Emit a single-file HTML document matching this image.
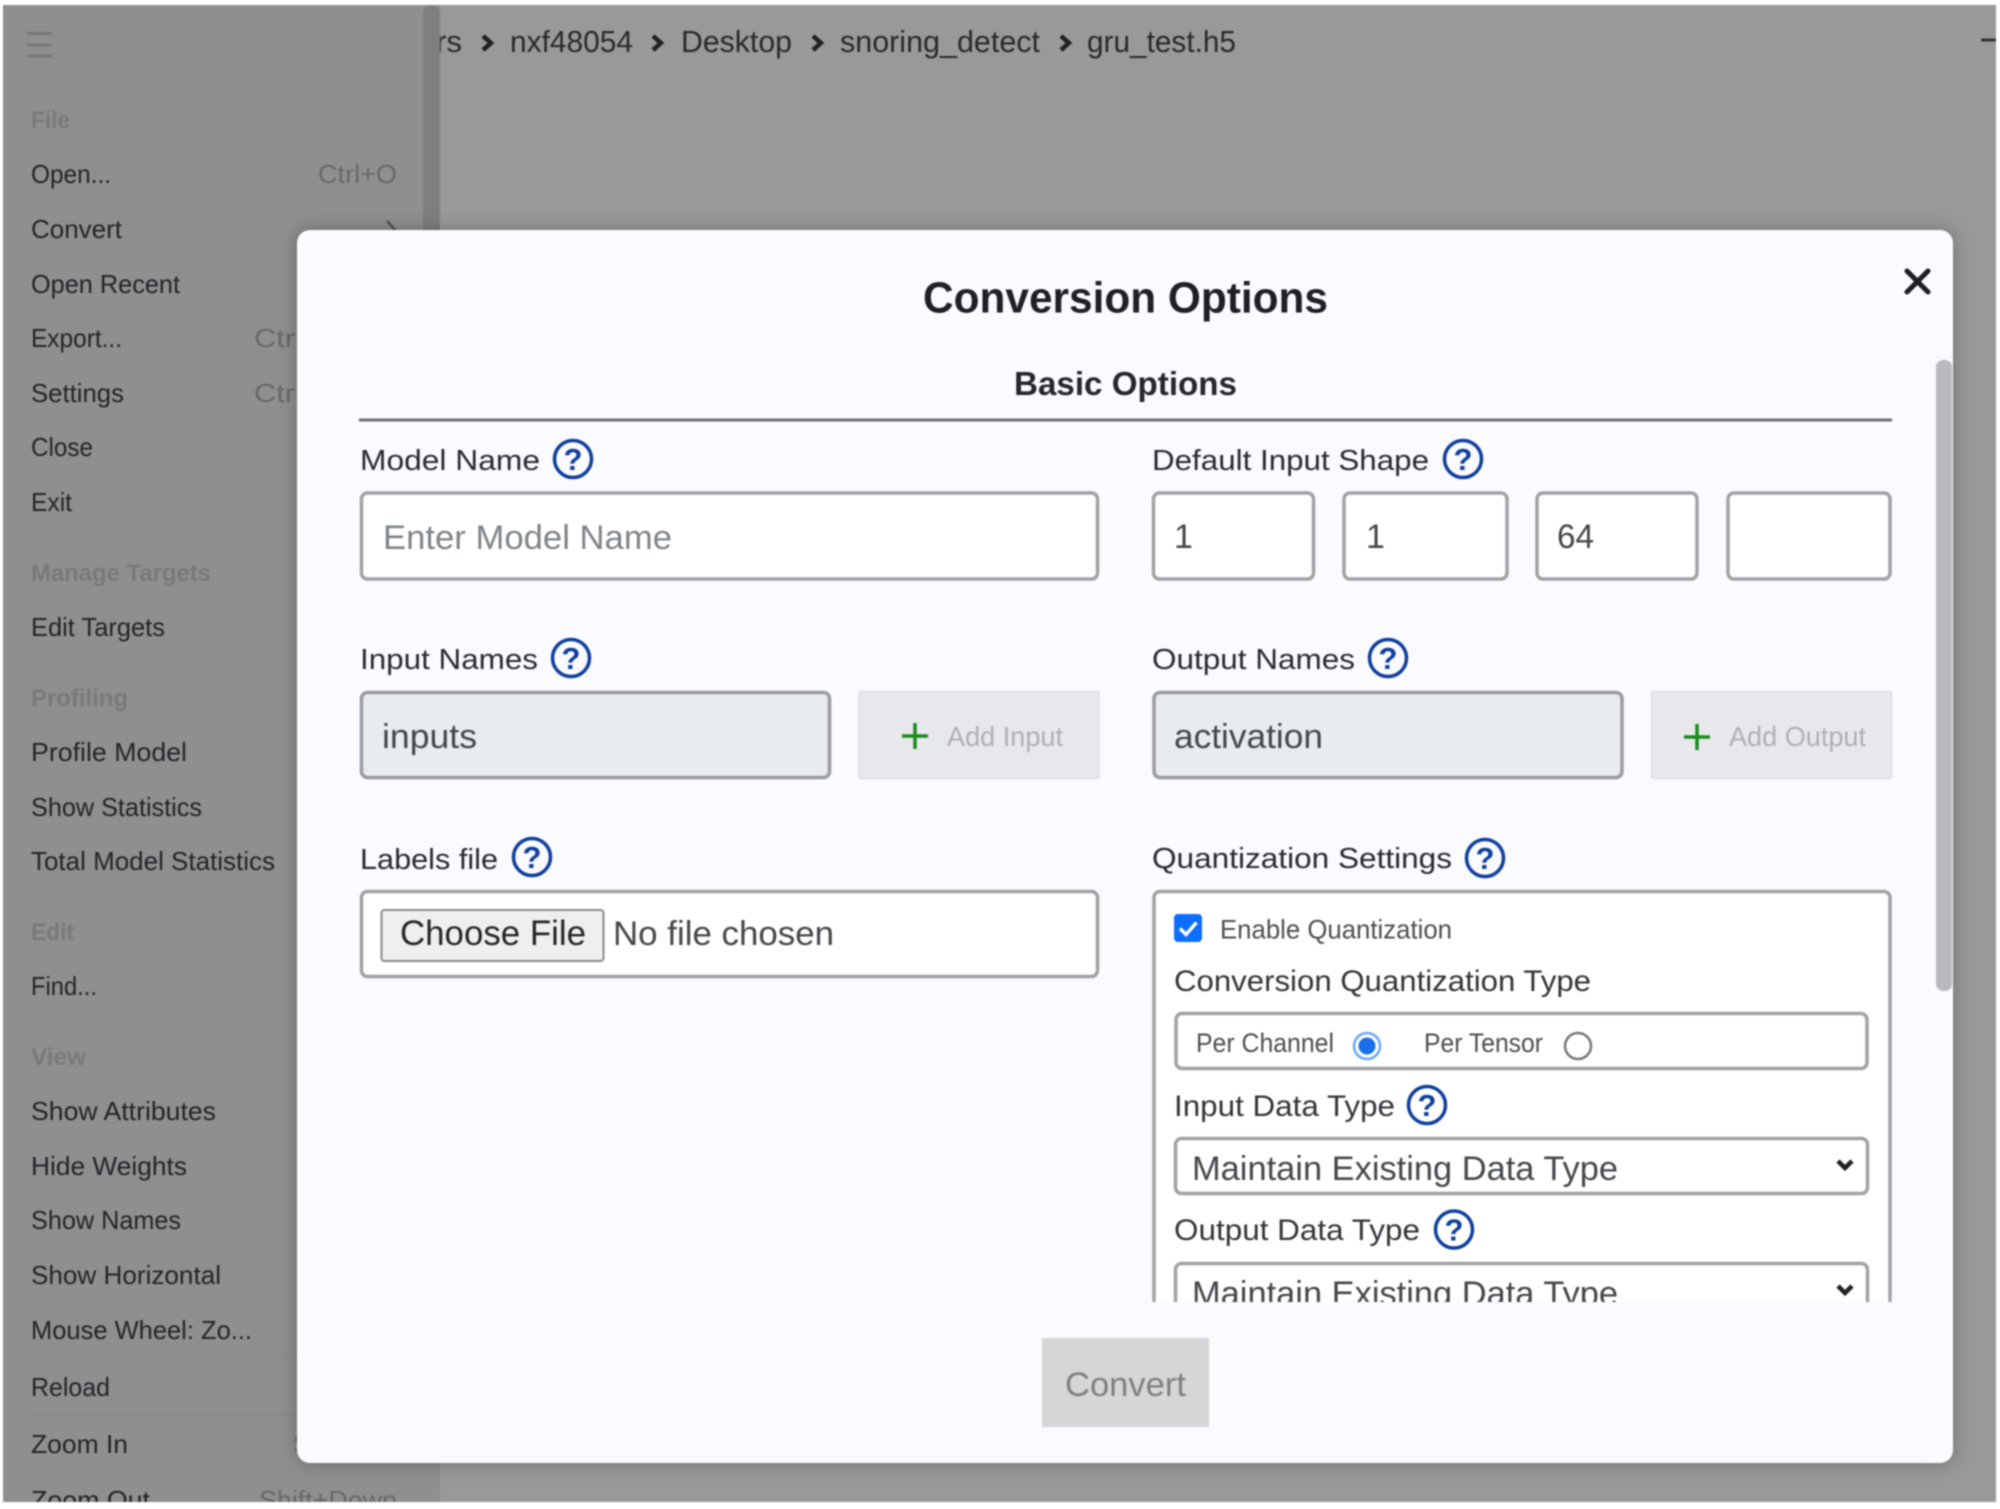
<!DOCTYPE html>
<html lang="en">
<head>
<meta charset="utf-8">
<title>Conversion Options</title>
<style>
html,body{margin:0;padding:0;background:#fff;width:2000px;height:1509px;overflow:hidden}
svg{display:block;filter:blur(.75px)}
text{font-family:"Liberation Sans",sans-serif}
.m{font-size:26px;fill:#242428}
.h{font-size:24px;font-weight:bold;fill:#797979}
.s{font-size:26px;fill:#686868}
.b{font-size:31px;fill:#29292b}
.l{font-size:29px;fill:#29292e}
.v{font-size:34px;fill:#43474b}
.add{font-size:28px;fill:#b0b0b4}
.q{font-size:27px;fill:#4e4e53}
.ql{font-size:30px;fill:#333339}
.hq{font-size:31px;fill:#0f3f9c;text-anchor:middle;font-weight:bold}
.box{fill:#fff;stroke:#a2a2a5;stroke-width:3.500}
.ro{fill:#e9ecef;stroke:#9c9c9f;stroke-width:3.500}
.hc{fill:none;stroke:#0f3f9c;stroke-width:3.500}
.ch{fill:none;stroke:#222224;stroke-width:4.500}
</style>
</head>
<body>
<svg xmlns="http://www.w3.org/2000/svg" width="2000" height="1509" viewBox="0 0 2000 1509">
  <!-- window background -->
  <rect x="0" y="0" width="2000" height="1509" fill="#999999"/>

  <!-- breadcrumb -->
  <text class="b" x="436" y="52" textLength="26" lengthAdjust="spacingAndGlyphs">rs</text>
  <path class="ch" d="M483 36l8 7-8 7"/>
  <text class="b" x="510" y="52" textLength="123" lengthAdjust="spacingAndGlyphs">nxf48054</text>
  <path class="ch" d="M653 36l8 7-8 7"/>
  <text class="b" x="681" y="52" textLength="111" lengthAdjust="spacingAndGlyphs">Desktop</text>
  <path class="ch" d="M813 36l8 7-8 7"/>
  <text class="b" x="840" y="52" textLength="200" lengthAdjust="spacingAndGlyphs">snoring_detect</text>
  <path class="ch" d="M1061 36l8 7-8 7"/>
  <text class="b" x="1087" y="52" textLength="149" lengthAdjust="spacingAndGlyphs">gru_test.h5</text>
  <rect x="1981" y="38.500" width="15" height="3" fill="#333"/>

  <!-- sidebar -->
  <rect x="0" y="0" width="440" height="1509" fill="#8f8f8f"/>
  <rect x="423" y="5" width="17" height="400" rx="8" fill="#7f7f80"/>
  <g stroke="#777" stroke-width="3"><path d="M27 33.500h25M27 45h25M27 56h25"/></g>

  <text class="h" x="31" y="128" textLength="39" lengthAdjust="spacingAndGlyphs">File</text>
  <text class="m" x="31" y="183" textLength="80" lengthAdjust="spacingAndGlyphs">Open...</text>
  <text class="s" x="318" y="183" textLength="79" lengthAdjust="spacingAndGlyphs">Ctrl+O</text>
  <text class="m" x="31" y="238" textLength="91" lengthAdjust="spacingAndGlyphs">Convert</text>
  <path d="M387 221l9 10" fill="none" stroke="#555" stroke-width="2.500"/>
  <text class="m" x="31" y="293" textLength="149" lengthAdjust="spacingAndGlyphs">Open Recent</text>
  <text class="m" x="31" y="347" textLength="91" lengthAdjust="spacingAndGlyphs">Export...</text>
  <text class="s" x="254" y="347" textLength="48" lengthAdjust="spacingAndGlyphs">Ctrl</text>
  <text class="m" x="31" y="402" textLength="93" lengthAdjust="spacingAndGlyphs">Settings</text>
  <text class="s" x="254" y="402" textLength="48" lengthAdjust="spacingAndGlyphs">Ctrl</text>
  <text class="m" x="31" y="456" textLength="62" lengthAdjust="spacingAndGlyphs">Close</text>
  <text class="m" x="31" y="511" textLength="41" lengthAdjust="spacingAndGlyphs">Exit</text>
  <text class="h" x="31" y="581" textLength="180" lengthAdjust="spacingAndGlyphs">Manage Targets</text>
  <text class="m" x="31" y="636" textLength="134" lengthAdjust="spacingAndGlyphs">Edit Targets</text>
  <text class="h" x="31" y="706" textLength="97" lengthAdjust="spacingAndGlyphs">Profiling</text>
  <text class="m" x="31" y="761" textLength="156" lengthAdjust="spacingAndGlyphs">Profile Model</text>
  <text class="m" x="31" y="816" textLength="171" lengthAdjust="spacingAndGlyphs">Show Statistics</text>
  <text class="m" x="31" y="870" textLength="244" lengthAdjust="spacingAndGlyphs">Total Model Statistics</text>
  <text class="h" x="31" y="940" textLength="43" lengthAdjust="spacingAndGlyphs">Edit</text>
  <text class="m" x="31" y="995" textLength="66" lengthAdjust="spacingAndGlyphs">Find...</text>
  <text class="h" x="31" y="1065" textLength="55" lengthAdjust="spacingAndGlyphs">View</text>
  <text class="m" x="31" y="1120" textLength="185" lengthAdjust="spacingAndGlyphs">Show Attributes</text>
  <text class="m" x="31" y="1175" textLength="156" lengthAdjust="spacingAndGlyphs">Hide Weights</text>
  <text class="m" x="31" y="1229" textLength="150" lengthAdjust="spacingAndGlyphs">Show Names</text>
  <text class="m" x="31" y="1284" textLength="190" lengthAdjust="spacingAndGlyphs">Show Horizontal</text>
  <text class="m" x="31" y="1339" textLength="221" lengthAdjust="spacingAndGlyphs">Mouse Wheel: Zo...</text>
  <rect x="31" y="1359" width="380" height="1.500" fill="#8a8a8a"/>
  <text class="m" x="31" y="1396" textLength="79" lengthAdjust="spacingAndGlyphs">Reload</text>
  <rect x="31" y="1414" width="380" height="1.500" fill="#8a8a8a"/>
  <text class="m" x="31" y="1453" textLength="97" lengthAdjust="spacingAndGlyphs">Zoom In</text>
  <text class="s" x="293" y="1453">S</text>
  <text class="m" x="31" y="1509" textLength="119" lengthAdjust="spacingAndGlyphs">Zoom Out</text>
  <text class="s" x="259" y="1509" textLength="138" lengthAdjust="spacingAndGlyphs">Shift+Down</text>

  <!-- modal -->
  <rect x="297" y="230" width="1656" height="1233" rx="13" fill="#fafaff" style="filter:drop-shadow(0 0 9px rgba(0,0,0,.28))"/>
  <text x="923" y="312.500" font-size="44" font-weight="bold" fill="#1f1f24" textLength="405" lengthAdjust="spacingAndGlyphs">Conversion Options</text>
  <path d="M1907 271l21 21M1928 271l-21 21" stroke="#1d1d22" stroke-width="5" stroke-linecap="round" fill="none"/>
  <text x="1014" y="395" font-size="33" font-weight="bold" fill="#26262b" textLength="223" lengthAdjust="spacingAndGlyphs">Basic Options</text>
  <rect x="359" y="418.500" width="1533" height="3" fill="#6e6e72"/>

  <!-- scroll bar -->
  <rect x="1936" y="360" width="16" height="631" rx="7" fill="#b9b9be"/>

  <!-- left column -->
  <text class="l" x="360" y="470" textLength="180" lengthAdjust="spacingAndGlyphs">Model Name</text>
  <circle class="hc" cx="573" cy="459" r="18.500"/><text class="hq" x="573" y="470">?</text>
  <rect class="box" x="361.500" y="493" width="736" height="86" rx="6"/>
  <text x="383" y="549" font-size="34" fill="#7f8489" textLength="289" lengthAdjust="spacingAndGlyphs">Enter Model Name</text>

  <text class="l" x="360" y="669" textLength="178" lengthAdjust="spacingAndGlyphs">Input Names</text>
  <circle class="hc" cx="571" cy="658" r="18.500"/><text class="hq" x="571" y="669">?</text>
  <rect class="ro" x="361.500" y="692.500" width="468" height="85" rx="6"/>
  <text class="v" x="382" y="748" textLength="95" lengthAdjust="spacingAndGlyphs">inputs</text>
  <rect x="859" y="691.500" width="240" height="87" rx="2" fill="#e8e8ec" stroke="#dedee2" stroke-width="1.500"/>
  <path d="M915 723v26M902 736h26" stroke="#1c8a1c" stroke-width="3.500" fill="none"/>
  <text class="add" x="947" y="746" textLength="116" lengthAdjust="spacingAndGlyphs">Add Input</text>

  <text class="l" x="360" y="869" textLength="138" lengthAdjust="spacingAndGlyphs">Labels file</text>
  <circle class="hc" cx="532" cy="857" r="18.500"/><text class="hq" x="532" y="868">?</text>
  <rect class="box" x="361.500" y="891.500" width="736" height="85" rx="6"/>
  <rect x="381.500" y="910" width="222" height="51" rx="3" fill="#efefef" stroke="#8a8a8c" stroke-width="2"/>
  <text x="400" y="945" font-size="35" fill="#26262a" textLength="186" lengthAdjust="spacingAndGlyphs">Choose File</text>
  <text class="v" x="613" y="945" textLength="221" lengthAdjust="spacingAndGlyphs">No file chosen</text>

  <!-- right column -->
  <text class="l" x="1152" y="470" textLength="277" lengthAdjust="spacingAndGlyphs">Default Input Shape</text>
  <circle class="hc" cx="1463" cy="459" r="18.500"/><text class="hq" x="1463" y="470">?</text>
  <rect class="box" x="1153.500" y="493" width="160" height="86" rx="6"/>
  <rect class="box" x="1344" y="493" width="163" height="86" rx="6"/>
  <rect class="box" x="1537" y="493" width="160" height="86" rx="6"/>
  <rect class="box" x="1728" y="493" width="162" height="86" rx="6"/>
  <text class="v" x="1174" y="548">1</text>
  <text class="v" x="1366" y="548">1</text>
  <text class="v" x="1557" y="548" textLength="37" lengthAdjust="spacingAndGlyphs">64</text>

  <text class="l" x="1152" y="669" textLength="203" lengthAdjust="spacingAndGlyphs">Output Names</text>
  <circle class="hc" cx="1388" cy="658" r="18.500"/><text class="hq" x="1388" y="669">?</text>
  <rect class="ro" x="1154" y="692.500" width="468" height="85" rx="6"/>
  <text class="v" x="1174" y="748" textLength="149" lengthAdjust="spacingAndGlyphs">activation</text>
  <rect x="1651.500" y="691.500" width="240" height="87" rx="2" fill="#e8e8ec" stroke="#dedee2" stroke-width="1.500"/>
  <path d="M1697 724v26M1684 737h26" stroke="#1c8a1c" stroke-width="3.500" fill="none"/>
  <text class="add" x="1729" y="746" textLength="137" lengthAdjust="spacingAndGlyphs">Add Output</text>

  <text class="l" x="1152" y="868" textLength="300" lengthAdjust="spacingAndGlyphs">Quantization Settings</text>
  <circle class="hc" cx="1485" cy="858" r="18.500"/><text class="hq" x="1485" y="869">?</text>

  <!-- quantization panel -->
  <rect class="box" x="1154" y="891.500" width="736" height="470" rx="6"/>
  <rect x="1174" y="914" width="28" height="28" rx="4" fill="#0d6efd"/>
  <path d="M1180 928.500l6 6 10.500-12" fill="none" stroke="#fff" stroke-width="3.500"/>
  <text class="q" x="1220" y="938.500" textLength="232" lengthAdjust="spacingAndGlyphs">Enable Quantization</text>
  <text class="ql" x="1174" y="991" textLength="417" lengthAdjust="spacingAndGlyphs">Conversion Quantization Type</text>

  <rect class="box" x="1176" y="1013.500" width="691" height="55" rx="6"/>
  <text class="q" x="1196" y="1052" textLength="138" lengthAdjust="spacingAndGlyphs">Per Channel</text>
  <circle cx="1367" cy="1046" r="13" fill="#fff" stroke="#6ea8fe" stroke-width="2.500"/>
  <circle cx="1367" cy="1046" r="8.500" fill="#1a6fe8"/>
  <text class="q" x="1424" y="1052" textLength="119" lengthAdjust="spacingAndGlyphs">Per Tensor</text>
  <circle cx="1578" cy="1046" r="13" fill="#fff" stroke="#77777a" stroke-width="2.500"/>

  <text class="ql" x="1174" y="1116" textLength="221" lengthAdjust="spacingAndGlyphs">Input Data Type</text>
  <circle class="hc" cx="1427" cy="1105" r="18.500"/><text class="hq" x="1427" y="1116">?</text>
  <rect class="box" x="1175.500" y="1138.500" width="692" height="55" rx="6"/>
  <text class="v" x="1192" y="1180" textLength="426" lengthAdjust="spacingAndGlyphs">Maintain Existing Data Type</text>
  <path d="M1838 1161l7 7 7-7" class="ch"/>

  <text class="ql" x="1174" y="1240" textLength="246" lengthAdjust="spacingAndGlyphs">Output Data Type</text>
  <circle class="hc" cx="1454" cy="1229.500" r="18.500"/><text class="hq" x="1454" y="1240.500">?</text>
  <rect class="box" x="1175.500" y="1263.500" width="692" height="55" rx="6"/>
  <text class="v" x="1192" y="1305" textLength="426" lengthAdjust="spacingAndGlyphs">Maintain Existing Data Type</text>
  <path d="M1838 1286l7 7 7-7" class="ch"/>

  <!-- scroll clip cover & footer -->
  <rect x="340" y="1302" width="1580" height="150" fill="#fafaff"/>
  <rect x="1042" y="1338" width="167" height="89" fill="#d6d6d7"/>
  <text x="1065" y="1396" font-size="34" fill="#808083" textLength="121" lengthAdjust="spacingAndGlyphs">Convert</text>

  <!-- outer white frame -->
  <rect x="0" y="0" width="2000" height="5" fill="#fff"/>
  <rect x="0" y="1502" width="2000" height="7" fill="#fff"/>
  <rect x="0" y="0" width="3" height="1509" fill="#fff"/>
  <rect x="1996" y="0" width="4" height="1509" fill="#fff"/>
</svg>
</body>
</html>
